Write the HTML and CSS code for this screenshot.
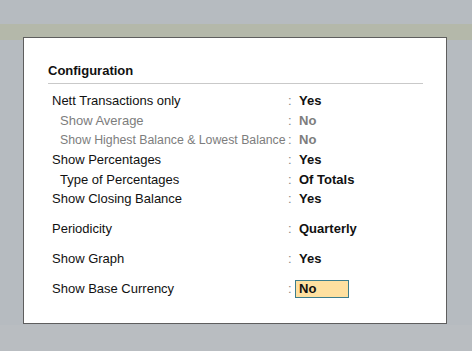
FILE: index.html
```html
<!DOCTYPE html>
<html lang="en">
<head>
    <meta charset="UTF-8">
    <title>Configuration</title>
    <link rel="stylesheet" href="styles.css">
</head>
<body>
    <div class="dialog">
        <h2 class="title">Configuration</h2>
        <div class="rows">
            <div class="row">
                <span class="label">Nett Transactions only</span>
                <span class="colon">:</span>
                <span class="value">Yes</span>
            </div>
            <div class="row sub muted">
                <span class="label">Show Average</span>
                <span class="colon">:</span>
                <span class="value">No</span>
            </div>
            <div class="row sub muted">
                <span class="label long">Show Highest Balance &amp; Lowest Balance</span>
                <span class="colon">:</span>
                <span class="value">No</span>
            </div>
            <div class="row">
                <span class="label">Show Percentages</span>
                <span class="colon">:</span>
                <span class="value">Yes</span>
            </div>
            <div class="row sub">
                <span class="label">Type of Percentages</span>
                <span class="colon">:</span>
                <span class="value">Of Totals</span>
            </div>
            <div class="row">
                <span class="label">Show Closing Balance</span>
                <span class="colon">:</span>
                <span class="value">Yes</span>
            </div>
            <div class="row spaced">
                <span class="label">Periodicity</span>
                <span class="colon">:</span>
                <span class="value">Quarterly</span>
            </div>
            <div class="row spaced">
                <span class="label">Show Graph</span>
                <span class="colon">:</span>
                <span class="value">Yes</span>
            </div>
            <div class="row spaced">
                <span class="label">Show Base Currency</span>
                <span class="colon">:</span>
                <span class="value active">No</span>
            </div>
        </div>
    </div>
</body>
</html>
```

FILE: styles.css
```css
* {
    margin: 0;
    padding: 0;
    box-sizing: border-box;
}
body {
    font-family: 'Liberation Sans', Arial, sans-serif;
    font-size: 13px;
    color: #111;
    height: 351px;
    overflow: hidden;
    background: linear-gradient(to bottom,
        #b6bbc0 0, #b6bbc0 24px,
        #b4b8aa 24px, #b4b8aa 40px,
        #b6bbc0 40px, #b6bbc0 325px,
        #b9bdc1 325px);
    padding-top: 37px;
    padding-left: 23px;
}
.dialog {
    width: 424px;
    height: 287px;
    background: #ffffff;
    border: 1px solid #5e5e5e;
    padding: 24px 24px 0 24px;
}
.title {
    font-size: 13px;
    font-weight: bold;
    line-height: 16px;
    padding-top: 1px;
    padding-bottom: 4px;
    border-bottom: 1px solid #c9c9c9;
    width: 375px;
}
.rows {
    margin-top: 7px;
    padding-left: 4px;
}
.row {
    display: flex;
    align-items: center;
    height: 19.6px;
}
.row.spaced {
    margin-top: 10.4px;
}
.label {
    width: 236px;
    white-space: nowrap;
}
.label.long {
    font-size: 12.3px;
}
.sub .label {
    padding-left: 8px;
}
.colon {
    width: 11px;
    color: #8a8a8a;
}
.value {
    font-weight: bold;
}
.muted {
    color: #7d7d7d;
}
.value.active {
    margin-left: -4px;
    width: 54px;
    height: 18px;
    line-height: 16px;
    padding-left: 3px;
    background: #fee0a0;
    border: 1px solid #3c7d8c;
}
```
